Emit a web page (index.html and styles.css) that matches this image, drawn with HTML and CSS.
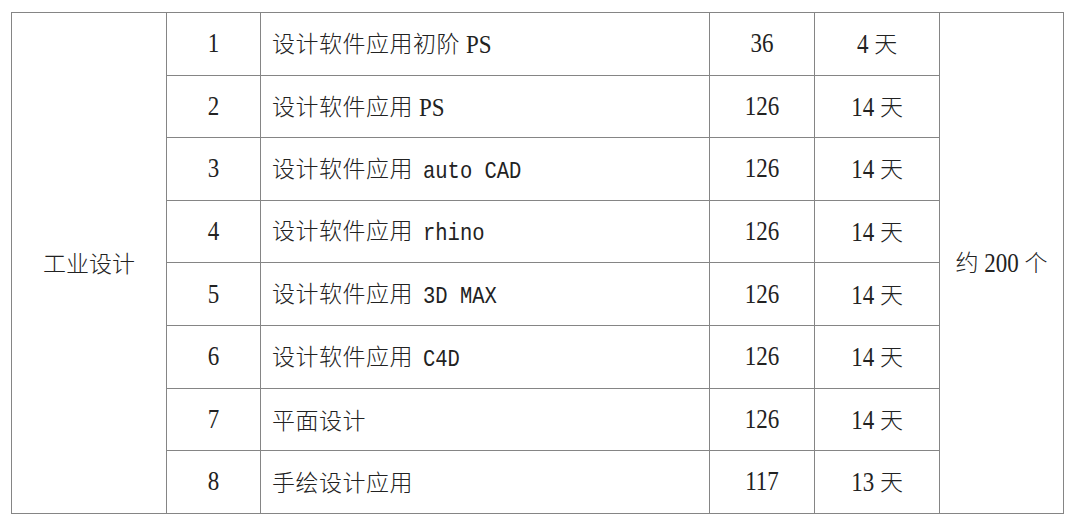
FILE: index.html
```html
<!DOCTYPE html>
<html lang="zh">
<head>
<meta charset="utf-8">
<title>课程表</title>
<link rel="stylesheet" href="styles.css">
</head>
<body>
<table class="grid">
  <colgroup>
    <col class="c-major">
    <col class="c-no">
    <col class="c-name">
    <col class="c-hours">
    <col class="c-days">
    <col class="c-count">
  </colgroup>
  <tbody>
    <tr>
      <td class="center cjk" rowspan="8">工业设计</td>
      <td class="center num"><span class="tall">1</span></td>
      <td class="name">设计软件应用初阶<span class="lat serif">PS</span></td>
      <td class="center num"><span class="tall">36</span></td>
      <td class="center num"><span class="tall">4</span> <span class="cjk">天</span></td>
      <td class="center num" rowspan="8"><span class="cjk">约</span> <span class="tall">200</span> <span class="cjk">个</span></td>
    </tr>
    <tr>
      <td class="center num"><span class="tall">2</span></td>
      <td class="name">设计软件应用<span class="lat serif">PS</span></td>
      <td class="center num"><span class="tall">126</span></td>
      <td class="center num"><span class="tall">14</span> <span class="cjk">天</span></td>
    </tr>
    <tr>
      <td class="center num"><span class="tall">3</span></td>
      <td class="name">设计软件应用<span class="lat">auto CAD</span></td>
      <td class="center num"><span class="tall">126</span></td>
      <td class="center num"><span class="tall">14</span> <span class="cjk">天</span></td>
    </tr>
    <tr>
      <td class="center num"><span class="tall">4</span></td>
      <td class="name">设计软件应用<span class="lat">rhino</span></td>
      <td class="center num"><span class="tall">126</span></td>
      <td class="center num"><span class="tall">14</span> <span class="cjk">天</span></td>
    </tr>
    <tr>
      <td class="center num"><span class="tall">5</span></td>
      <td class="name">设计软件应用<span class="lat">3D MAX</span></td>
      <td class="center num"><span class="tall">126</span></td>
      <td class="center num"><span class="tall">14</span> <span class="cjk">天</span></td>
    </tr>
    <tr>
      <td class="center num"><span class="tall">6</span></td>
      <td class="name">设计软件应用<span class="lat">C4D</span></td>
      <td class="center num"><span class="tall">126</span></td>
      <td class="center num"><span class="tall">14</span> <span class="cjk">天</span></td>
    </tr>
    <tr>
      <td class="center num"><span class="tall">7</span></td>
      <td class="name">平面设计</td>
      <td class="center num"><span class="tall">126</span></td>
      <td class="center num"><span class="tall">14</span> <span class="cjk">天</span></td>
    </tr>
    <tr>
      <td class="center num"><span class="tall">8</span></td>
      <td class="name">手绘设计应用</td>
      <td class="center num"><span class="tall">117</span></td>
      <td class="center num"><span class="tall">13</span> <span class="cjk">天</span></td>
    </tr>
  </tbody>
</table>
</body>
</html>
```
FILE: styles.css
```css
html, body {
  margin: 0;
  padding: 0;
  background: #ffffff;
}

body {
  padding: 12px 0 0 11px;
  color: #222222;
  font-family: "Noto Sans CJK SC", "Liberation Serif", serif;
  font-size: 23px;
}

.grid {
  border-collapse: collapse;
  table-layout: fixed;
  width: 1053px;
}

.grid td {
  border: 1px solid #858585;
  height: 61.6px;
  padding: 0;
  line-height: 1;
  vertical-align: middle;
}

.c-major { width: 155px; }
.c-no { width: 94px; }
.c-name { width: 449px; }
.c-hours { width: 105px; }
.c-days { width: 125px; }
.c-count { width: 124px; }

.center {
  text-align: center;
}

.name {
  padding-left: 11px !important;
  font-family: "Noto Sans CJK SC", sans-serif;
  font-weight: 300;
  letter-spacing: 0.5px;
}

.cjk {
  font-family: "Noto Sans CJK SC", sans-serif;
  font-weight: 300;
}

.num {
  font-family: "Liberation Serif", "Noto Sans CJK SC", serif;
  font-size: 23px;
}

.tall {
  display: inline-block;
  transform: scaleY(1.15);
}

.lat {
  display: inline-block;
  margin-left: 10px;
  font-family: "Liberation Mono", monospace;
  font-size: 20.5px;
  font-weight: 400;
  letter-spacing: 0;
  transform: scaleY(1.2);
}

.lat.serif {
  margin-left: 6px;
  font-family: "Liberation Serif", serif;
  font-size: 23px;
  transform: scaleY(1.1);
}
```
